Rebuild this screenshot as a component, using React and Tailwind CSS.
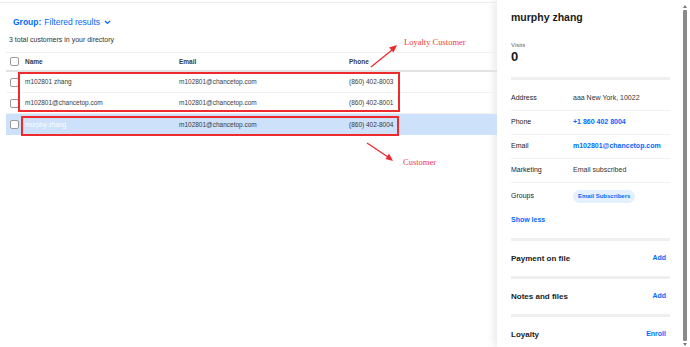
const rows = [
  { name: "m102801 zhang", email: "m102801@chancetop.com", phone: "(860) 402-8003" },
  { name: "m102801@chancetop.com", email: "m102801@chancetop.com", phone: "(860) 402-8001" },
  { name: "murphy zhang", email: "m102801@chancetop.com", phone: "(860) 402-8004", selected: true },
];

const details = [
  { label: "Address", value: "aaa New York, 10022" },
  { label: "Phone", value: "+1 860 402 8004", link: true },
  { label: "Email", value: "m102801@chancetop.com", link: true },
  { label: "Marketing", value: "Email subscribed" },
];

const sections = [
  { title: "Payment on file", action: "Add" },
  { title: "Notes and files", action: "Add" },
  { title: "Loyalty", action: "Enroll" },
];

const Box = () => (
  <div className="w-[9px] h-[9px] rounded-[2px] border border-[#9a9a9a] bg-white shrink-0" />
);

const Directory = () => {
  return (
    <div className="relative flex-1 h-full">
      <div className="h-[3px] border-b border-[#ececec]" />
      <div className="mt-[13px] ml-[13px] h-[12px] flex items-center text-[8.5px] text-[#006aff]">
        <b className="font-bold">Group:</b>
        <span className="ml-[3px]">Filtered results</span>
        <svg width="7" height="5" viewBox="0 0 7 5" className="ml-[4px]">
          <path d="M1 1l2.5 2.5L6 1" fill="none" stroke="#006aff" strokeWidth="1.2" />
        </svg>
      </div>
      <p className="mt-[7px] ml-[9px] h-[10px] leading-[10px] text-[7px] text-[#333]">
        3 total customers in your directory
      </p>
      <div className="mt-[7px] ml-[6px] text-[6.5px] text-[#3a3a3a]">
        <div className="h-[20px] flex items-center border-t border-b-2 border-t-[#efefef] border-b-[#e2e2e2] pl-[4px]">
          <Box />
          <span className="ml-[6px] w-[154px] font-bold">Name</span>
          <span className="w-[170px] font-bold">Email</span>
          <span className="font-bold">Phone</span>
        </div>
        {rows.map((r) => (
          <div
            key={r.phone}
            className={`h-[21px] flex items-center pl-[4px] ${
              r.selected ? "bg-[#cde1fb]" : "border-b border-[#f1f1f1]"
            }`}
          >
            <Box />
            <span className={`ml-[6px] w-[154px] ${r.selected ? "text-white" : ""}`}>{r.name}</span>
            <span className="w-[170px]">{r.email}</span>
            <span>{r.phone}</span>
          </div>
        ))}
      </div>

      {/* annotations */}
      <div className="absolute left-[18px] top-[72px] w-[382px] h-[40px] border-2 border-[#ee2a2f]" />
      <div className="absolute left-[21px] top-[116px] w-[378px] h-[20px] border-2 border-[#ee2a2f]" />
      <svg className="absolute left-0 top-0" width="497" height="347">
        <line x1="371" y1="67" x2="392" y2="50" stroke="#ee2a2f" strokeWidth="1.3" />
        <path d="M397 45l-8 2.5 4.5 5z" fill="#ee2a2f" />
        <line x1="367" y1="143" x2="388" y2="157" stroke="#ee2a2f" strokeWidth="1.3" />
        <path d="M393 161l-4-7.5-3.5 5.5z" fill="#ee2a2f" />
      </svg>
      <span className="absolute left-[404px] top-[36px] text-[8.5px] text-[#ef3b3b] font-['Liberation_Serif',serif]">
        Loyalty Customer
      </span>
      <span className="absolute left-[403px] top-[156px] text-[8.5px] text-[#ef3b3b] font-['Liberation_Serif',serif]">
        Customer
      </span>
    </div>
  );
};

const Panel = () => {
  return (
    <div className="w-[193px] h-full bg-white flex shadow-[-3px_0_8px_rgba(0,0,0,0.09)] overflow-hidden">
      <div className="pl-[14px] w-[173px] shrink-0">
        <div className="w-[159px]">
          <h2 className="pt-[10px] h-[24px] leading-[14px] text-[10.5px] font-bold text-[#1a1a1a]">murphy zhang</h2>
          <p className="mt-[17px] h-[8px] leading-[8px] text-[6px] text-[#666]">Visits</p>
          <p className="mt-[1px] h-[14px] leading-[14px] text-[13px] font-bold text-[#1a1a1a]">0</p>
          <div className="mt-[13px] h-[3px] bg-[#efefef]" />
          <div className="mt-[7px] text-[7px] text-[#333]">
            {details.map((d) => (
              <div key={d.label} className="h-[24px] flex items-center border-b border-[#f0f0f0]">
                <span className="w-[62px] text-[#1a1a1a]">{d.label}</span>
                <span className={d.link ? "font-bold text-[#006aff]" : ""}>{d.value}</span>
              </div>
            ))}
            <div className="h-[26px] flex items-center">
              <span className="w-[62px] text-[#1a1a1a]">Groups</span>
              <span className="px-[5px] h-[13px] leading-[13px] rounded-full bg-[#e5f0ff] text-[#006aff] font-bold text-[6px]">
                Email Subscribers
              </span>
            </div>
            <div className="h-[22px] flex items-center font-bold text-[#006aff]">Show less</div>
          </div>
          {sections.map((s) => (
            <div key={s.title}>
              <div className={`${s.title === "Payment on file" ? "mt-[7px]" : ""} h-[3px] bg-[#efefef]`} />
              <div className="h-[35px] flex items-center justify-between pr-[4px]">
                <span className="text-[8px] font-bold text-[#1a1a1a]">{s.title}</span>
                <span className="text-[7px] font-bold text-[#006aff]">{s.action}</span>
              </div>
            </div>
          ))}
        </div>
      </div>
      <div className="w-[20px] flex flex-col items-center pl-[9px]">
        <div className="mt-[5px] w-0 h-0 border-l-[2px] border-r-[2px] border-b-[3px] border-l-transparent border-r-transparent border-b-[#777]" />
        <div className="mt-[2px] w-[4px] h-[331px] rounded-[1px] bg-[#8a8a8a]" />
        <div className="mt-[2px] w-0 h-0 border-l-[2px] border-r-[2px] border-t-[3px] border-l-transparent border-r-transparent border-t-[#777]" />
      </div>
    </div>
  );
};

export default function App() {
  return (
    <div className="w-[690px] h-[347px] flex bg-white overflow-hidden font-['Liberation_Sans',Arial,sans-serif]">
      <Directory />
      <Panel />
    </div>
  );
}
